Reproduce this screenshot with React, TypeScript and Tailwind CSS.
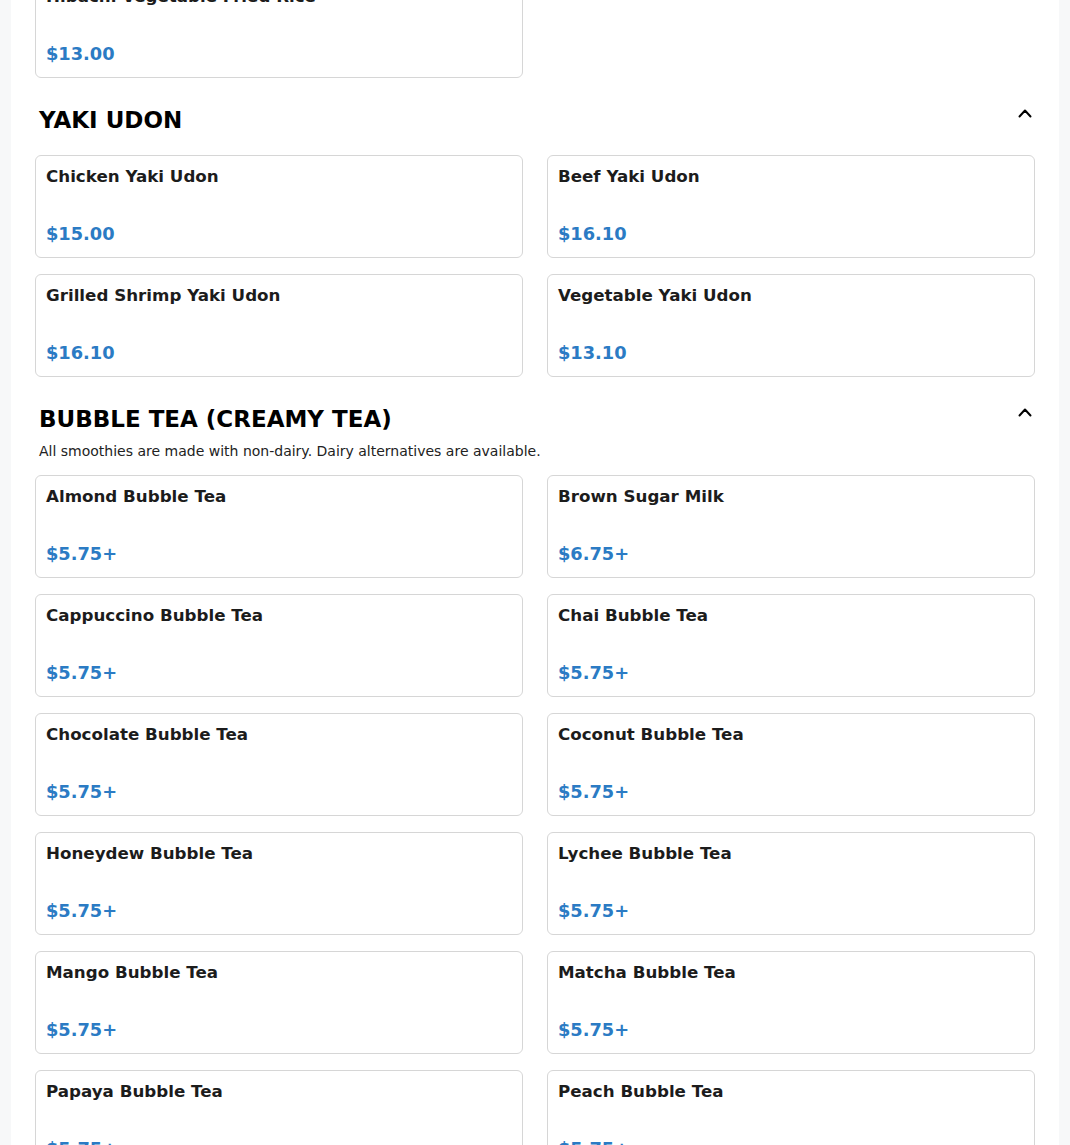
import React from "react";

type Item = { name: string; price: string };

const yaki: Item[] = [
  { name: "Chicken Yaki Udon", price: "$15.00" },
  { name: "Beef Yaki Udon", price: "$16.10" },
  { name: "Grilled Shrimp Yaki Udon", price: "$16.10" },
  { name: "Vegetable Yaki Udon", price: "$13.10" },
];

const bubble: Item[] = [
  "Almond Bubble Tea",
  "Brown Sugar Milk",
  "Cappuccino Bubble Tea",
  "Chai Bubble Tea",
  "Chocolate Bubble Tea",
  "Coconut Bubble Tea",
  "Honeydew Bubble Tea",
  "Lychee Bubble Tea",
  "Mango Bubble Tea",
  "Matcha Bubble Tea",
  "Papaya Bubble Tea",
  "Peach Bubble Tea",
].map((n) => ({ name: n, price: n === "Brown Sugar Milk" ? "$6.75+" : "$5.75+" }));

function Card({ item }: { item: Item }) {
  return (
    <div className="h-[103px] border border-[#d6d6d6] rounded-[6px] bg-white px-[10px] pt-[10px] pb-[11px] flex flex-col justify-between">
      <div className="text-[16.7px] leading-[20px] font-bold text-[#1c1c1c]">{item.name}</div>
      <div className="text-[17.8px] leading-[24px] font-bold text-[#2b7bc4]">{item.price}</div>
    </div>
  );
}

function Chevron() {
  return (
    <svg width="14" height="10" viewBox="0 0 14 10" className="block">
      <polyline points="1.5,8.5 7,2.5 12.5,8.5" fill="none" stroke="#000" strokeWidth="2" strokeLinecap="round" strokeLinejoin="round" />
    </svg>
  );
}

function Section({ title, desc, items }: { title: string; desc?: string; items: Item[] }) {
  return (
    <section className="mt-[26px]">
      <div className="flex items-start justify-between pl-[4px] pr-[3px]">
        <h2 className="text-[23px] leading-[32px] font-bold text-black">{title}</h2>
        <div className="mt-[4px]"><Chevron /></div>
      </div>
      {desc ? (
        <p className="pl-[4px] mt-[6px] text-[14px] leading-[20px] text-[#222]">{desc}</p>
      ) : null}
      <div className={`grid grid-cols-2 gap-x-6 gap-y-4 ${desc ? "mt-[14px]" : "mt-[19px]"}`}>
        {items.map((it) => (
          <Card key={it.name} item={it} />
        ))}
      </div>
    </section>
  );
}

export default function App() {
  return (
    <div className="min-h-screen bg-[#f7f8f9] px-[11px]" style={{ fontFamily: '"DejaVu Sans", "Noto Sans", sans-serif' }}>
      <div className="bg-white px-6 pb-10 overflow-hidden">
        <div className="grid grid-cols-2 gap-x-6 gap-y-4 -mt-[25px]">
          <Card item={{ name: "Hibachi Vegetable Fried Rice", price: "$13.00" }} />
        </div>
        <Section title="YAKI UDON" items={yaki} />
        <Section
          title="BUBBLE TEA (CREAMY TEA)"
          desc="All smoothies are made with non-dairy. Dairy alternatives are available."
          items={bubble}
        />
      </div>
    </div>
  );
}
